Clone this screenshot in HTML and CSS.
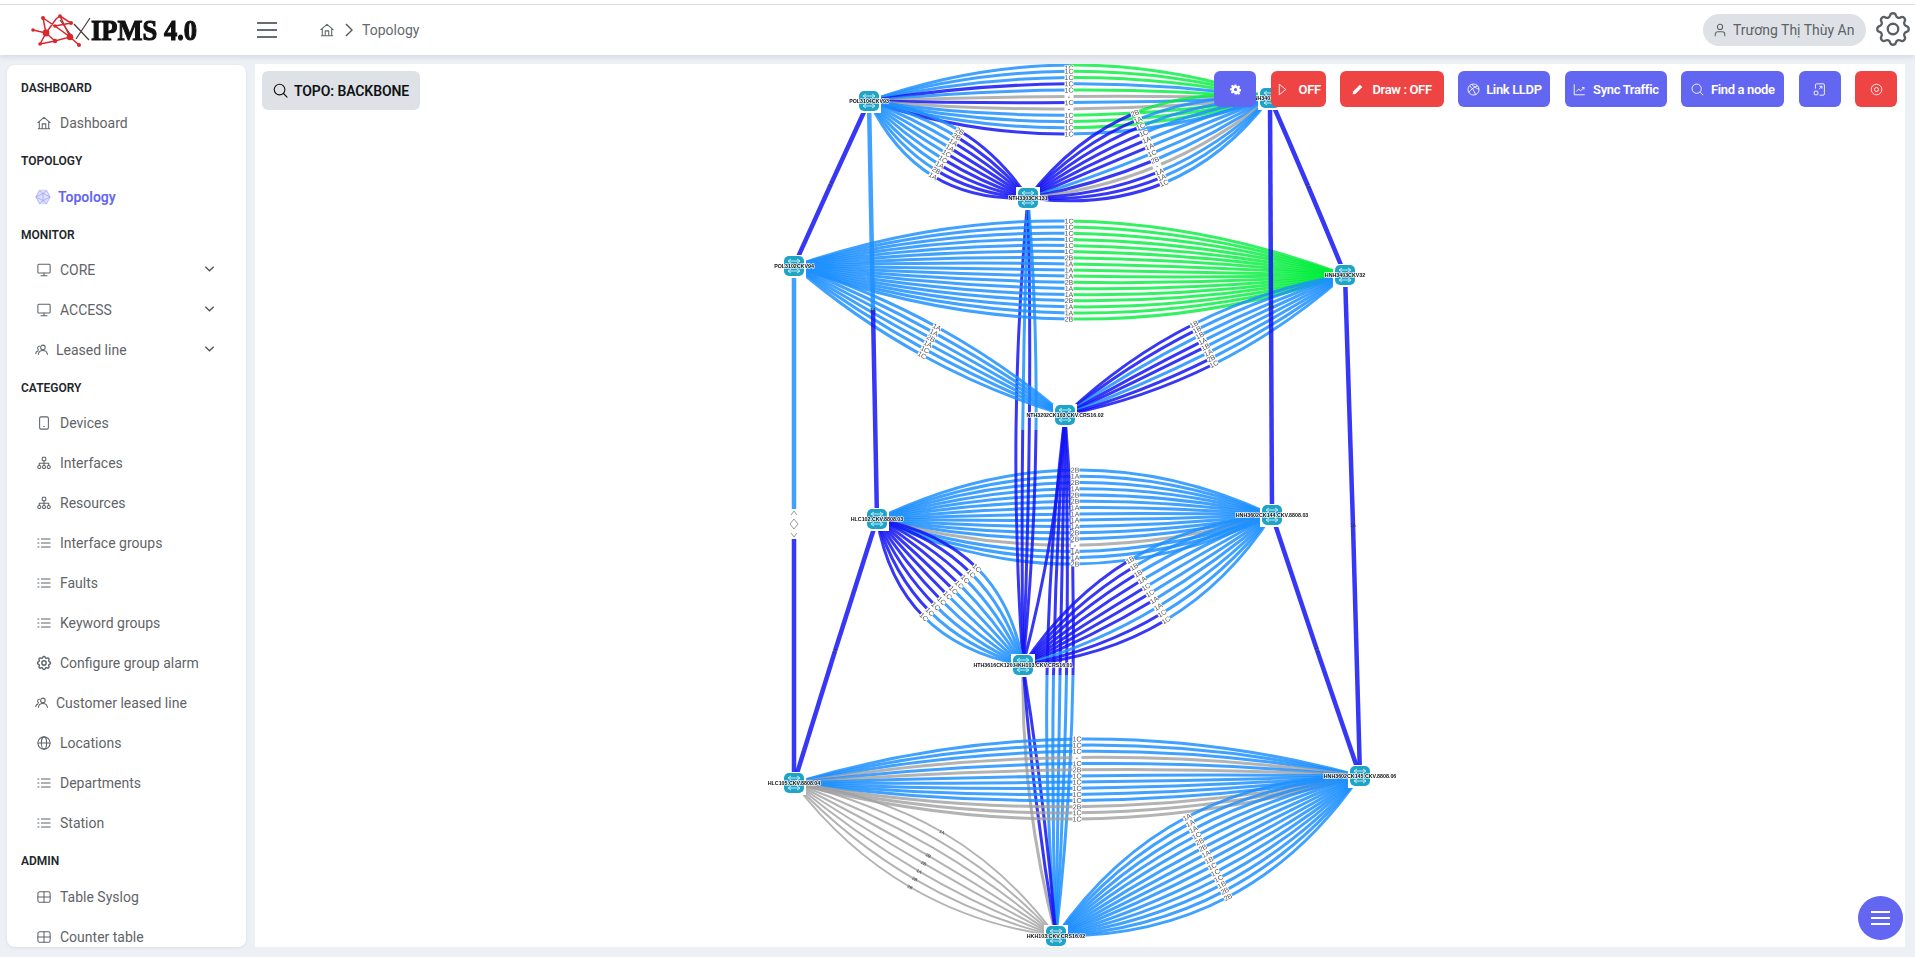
FILE: index.html
```html
<!DOCTYPE html>
<html lang="vi">
<head>
<meta charset="utf-8">
<title>IPMS 4.0 - Topology</title>
<link rel="stylesheet" href="styles.css">
</head>
<body>
<svg class="defs" width="0" height="0" aria-hidden="true">
  <defs>
    <symbol id="i-home" viewBox="0 0 16 16"><path d="M1 7.5 8 1.5l7 6M2.6 6.5V14.5h10.8V6.5M6 14.5V9h4v5.5M1.5 14.5h13"/></symbol>
    <symbol id="i-monitor" viewBox="0 0 16 16"><rect x="1" y="1.5" width="14" height="10" rx="1"/><path d="M8 11.5v3M4.5 14.5h7"/></symbol>
    <symbol id="i-users" viewBox="0 0 16 16"><circle cx="9" cy="5" r="2.6"/><path d="M3.8 13c.5-3 2.5-4.4 5.2-4.4s4.7 1.4 5.2 4.4M5 3.6a2.3 2.3 0 0 0-1 4.2M3.4 9c-1.4.4-2.2 1.4-2.6 3"/></symbol>
    <symbol id="i-device" viewBox="0 0 16 16"><rect x="3" y="1" width="10" height="14" rx="1.5"/><path d="M7.7 12h.6"/></symbol>
    <symbol id="i-tree" viewBox="0 0 16 16"><rect x="6" y="1.5" width="4" height="4" rx=".8"/><circle cx="2.6" cy="12.6" r="1.8"/><circle cx="8" cy="12.6" r="1.8"/><circle cx="13.4" cy="12.6" r="1.8"/><path d="M8 5.5v5.3M2.6 10.8V8.2h10.8v2.6"/></symbol>
    <symbol id="i-list" viewBox="0 0 16 16"><path d="M5 3.5h10M5 8h10M5 12.5h10M1 3.5h1.2M1 8h1.2M1 12.5h1.2"/></symbol>
    <symbol id="i-gear" viewBox="0 0 24 24"><path d="M10.325 4.317c.426-1.756 2.924-1.756 3.35 0a1.724 1.724 0 0 0 2.573 1.066c1.543-.94 3.31.826 2.37 2.37a1.724 1.724 0 0 0 1.065 2.572c1.756.426 1.756 2.924 0 3.35a1.724 1.724 0 0 0-1.066 2.573c.94 1.543-.826 3.31-2.37 2.37a1.724 1.724 0 0 0-2.572 1.065c-.426 1.756-2.924 1.756-3.35 0a1.724 1.724 0 0 0-2.573-1.066c-1.543.94-3.31-.826-2.37-2.37a1.724 1.724 0 0 0-1.065-2.572c-1.756-.426-1.756-2.924 0-3.35a1.724 1.724 0 0 0 1.066-2.573c-.94-1.543.826-3.31 2.37-2.37.996.608 2.296.07 2.572-1.065z"/><circle cx="12" cy="12" r="3"/></symbol>
    <symbol id="i-globe" viewBox="0 0 16 16"><circle cx="8" cy="8" r="7"/><ellipse cx="8" cy="8" rx="3" ry="7"/><path d="M1 8h14"/></symbol>
    <symbol id="i-table" viewBox="0 0 16 16"><rect x="1" y="2" width="14" height="12" rx="2"/><path d="M1 8h14M8 2v12"/></symbol>
    <symbol id="i-chev" viewBox="0 0 12 8"><path d="M1.5 1.5 6 6l4.500-4.500"/></symbol>
    <symbol id="i-search" viewBox="0 0 16 16"><circle cx="7" cy="7" r="5.700"/><path d="m11.200 11.200 3.800 3.800"/></symbol>
    <symbol id="i-user" viewBox="0 0 16 16"><circle cx="8" cy="4.500" r="3"/><path d="M2.500 14.500v-1.500a3 3 0 0 1 3-3h5a3 3 0 0 1 3 3v1.500"/></symbol>
  </defs>
</svg>

<div class="topline"></div>
<header class="header">
  <div class="logo">
    <svg class="logo-mark" viewBox="0 0 60 36" aria-hidden="true">
      <g class="logo-dark"><path d="M43 12 58 28M45 27 59 6M29 8 42 26"/></g>
      <g class="logo-net">
        <path d="M2 18 15 21 9 32M15 21 12 6M15 21 25 7 29 4 40 11 24 14 12 6M15 21 24 29 39 25 24 14M39 25 48 33 M24 29 9 32M29 4 39 25"/>
        <circle cx="2" cy="18" r="1.800"/><circle cx="15" cy="21" r="3.400"/><circle cx="9" cy="32" r="1.800"/><circle cx="12" cy="6" r="2"/><circle cx="24" cy="14" r="1.800"/><circle cx="29" cy="4" r="1.800"/><circle cx="40" cy="11" r="2"/><circle cx="24" cy="29" r="2.200"/><circle cx="39" cy="25" r="3.200"/><circle cx="48" cy="33" r="2"/>
      </g>
    </svg>
    <span class="logo-text">IPMS 4.0</span>
  </div>
  <div class="burger" aria-label="menu"><span></span><span></span><span></span></div>
  <nav class="crumbs">
    <svg class="ico"><use href="#i-home"/></svg>
    <svg class="crumb-sep" viewBox="0 0 8 14"><path d="M1 1l6 6-6 6"/></svg>
    <span>Topology</span>
  </nav>
  <div class="header-right">
    <div class="user-pill"><svg class="ico"><use href="#i-user"/></svg><span>Trương Thị Thùy An</span></div>
    <svg class="big-gear"><use href="#i-gear"/></svg>
  </div>
</header>

<div class="workspace">
  <aside class="sidebar">
    <div class="sec">DASHBOARD</div>
    <a class="item"><svg class="ico"><use href="#i-home"/></svg><span>Dashboard</span></a>
    <div class="sec">TOPOLOGY</div>
    <a class="item active">
      <svg class="ico-topo" viewBox="0 0 18 18"><path d="M5 1.500h8L17 9l-4 7.500H5L1 9z"/><path d="M1 9 9 5l8 4-8 4zM5 1.500 9 5l4-3.500M5 16.500 9 13l4 3.500M9 5v8"/></svg>
      <span>Topology</span>
    </a>
    <div class="sec">MONITOR</div>
    <a class="item"><svg class="ico"><use href="#i-monitor"/></svg><span>CORE</span><svg class="chev"><use href="#i-chev"/></svg></a>
    <a class="item"><svg class="ico"><use href="#i-monitor"/></svg><span>ACCESS</span><svg class="chev"><use href="#i-chev"/></svg></a>
    <a class="item tight"><svg class="ico"><use href="#i-users"/></svg><span>Leased line</span><svg class="chev"><use href="#i-chev"/></svg></a>
    <div class="sec">CATEGORY</div>
    <a class="item"><svg class="ico"><use href="#i-device"/></svg><span>Devices</span></a>
    <a class="item"><svg class="ico"><use href="#i-tree"/></svg><span>Interfaces</span></a>
    <a class="item"><svg class="ico"><use href="#i-tree"/></svg><span>Resources</span></a>
    <a class="item"><svg class="ico"><use href="#i-list"/></svg><span>Interface groups</span></a>
    <a class="item"><svg class="ico"><use href="#i-list"/></svg><span>Faults</span></a>
    <a class="item"><svg class="ico"><use href="#i-list"/></svg><span>Keyword groups</span></a>
    <a class="item"><svg class="ico gear"><use href="#i-gear"/></svg><span>Configure group alarm</span></a>
    <a class="item tight"><svg class="ico"><use href="#i-users"/></svg><span>Customer leased line</span></a>
    <a class="item"><svg class="ico"><use href="#i-globe"/></svg><span>Locations</span></a>
    <a class="item"><svg class="ico"><use href="#i-list"/></svg><span>Departments</span></a>
    <a class="item"><svg class="ico"><use href="#i-list"/></svg><span>Station</span></a>
    <div class="sec">ADMIN</div>
    <a class="item"><svg class="ico"><use href="#i-table"/></svg><span>Table Syslog</span></a>
    <a class="item"><svg class="ico"><use href="#i-table"/></svg><span>Counter table</span></a>
  </aside>

  <main class="canvas">
    <svg id="graph" class="graph" viewBox="255 64 1650 883" aria-label="Backbone topology"></svg>
    <button class="topo-btn"><svg class="ico"><use href="#i-search"/></svg><span>TOPO: BACKBONE</span></button>
    <div class="toolbar">
      <button class="btn indigo square"><svg class="solid" viewBox="0 0 24 24"><path d="M10 1h4l.6 3.200 2 .9 2.800-1.800 2.800 2.800-1.800 2.800.9 2 3.200.6v4l-3.200.6-.9 2 1.800 2.800-2.800 2.800-2.800-1.800-2 .9L14 23h-4l-.6-3.200-2-.9-2.800 1.800-2.800-2.800 1.800-2.800-.9-2L0 14v-4l3.200-.6.9-2L2.300 4.600l2.800-2.800 2.800 1.800 2-.9zM12 8.500a3.500 3.500 0 1 0 0 7 3.500 3.500 0 0 0 0-7z" fill-rule="evenodd"/></svg></button>
      <button class="btn red w-off"><svg class="line" viewBox="0 0 12 16"><path d="M2 1.500v13l8-6.500z"/></svg><span>OFF</span></button>
      <button class="btn red w-draw"><svg class="solid" viewBox="0 0 16 16"><path d="M11.500 1 15 4.500 5 14.500 1 15l.5-4z"/></svg><span>Draw : OFF</span></button>
      <button class="btn indigo w-link"><svg class="line" viewBox="0 0 16 16"><circle cx="8" cy="8" r="6.800"/><path d="M3 3.500c3 2 6 6 7.500 11M13 3.500C9 4.500 4 9 2 11.500M5.500 1.800C9 5 13 7.500 14.800 7.500"/></svg><span>Link LLDP</span></button>
      <button class="btn indigo w-sync"><svg class="line" viewBox="0 0 16 16"><path d="M1.500 1.500v13h13M4 10.500l3-3 2.500 2 4-4M11 5.500h2.500V8"/></svg><span>Sync Traffic</span></button>
      <button class="btn indigo w-find"><svg class="line"><use href="#i-search"/></svg><span>Find a node</span></button>
      <button class="btn indigo square"><svg class="line" viewBox="0 0 16 16"><path d="M3 7V2.500A1.500 1.500 0 0 1 4.500 1h8A1.500 1.500 0 0 1 14 2.500v11a1.500 1.500 0 0 1-1.500 1.500H8M7.500 7.500l3.500-3.500M8 4h3v3"/><rect x="1.500" y="10" width="4.500" height="4.500" rx=".8"/></svg></button>
      <button class="btn red square"><svg class="line" viewBox="0 0 16 16"><circle cx="8" cy="8" r="6.500"/><circle cx="8" cy="8" r="2.500"/></svg></button>
    </div>
    <button class="fab" aria-label="menu"><span></span><span></span><span></span></button>
  </main>
</div>
<script src="graph.js"></script>
</body>
</html>
```
FILE: styles.css
```css
* { box-sizing: border-box; }
html, body { margin: 0; height: 100%; overflow: hidden; }
body {
  display: flex;
  flex-direction: column;
  background: #edf1f6;
  font-family: Roboto, "Noto Sans", "Liberation Sans", sans-serif;
  font-size: 14px;
  color: #5f6468;
}
.defs { position: absolute; }
svg { display: block; flex: none; }

.topline { height: 5px; flex: none; background: #fff; border-bottom: 1px solid #dfe1e4; }
.header {
  height: 50px;
  flex: none;
  display: flex;
  align-items: center;
  background: #fff;
  box-shadow: 0 2px 5px rgba(120, 130, 150, .22);
  position: relative;
  z-index: 2;
}
.logo { width: 257px; padding-left: 31px; display: flex; align-items: center; flex: none; }
.logo-mark { width: 60px; height: 36px; }
.logo-net path { fill: none; stroke: #d9272b; stroke-width: 1.500; }
.logo-net circle { fill: #d9272b; }
.logo-dark path { fill: none; stroke: #4a3a3c; stroke-width: 1.200; }
.logo-text {
  font-family: "Liberation Serif", serif;
  font-weight: 700;
  font-size: 26.500px;
  line-height: 30px;
  color: #111;
  white-space: nowrap;
  -webkit-text-stroke: 1px #111;
  transform: scaleY(1.150);
}
.burger { width: 20px; display: flex; flex-direction: column; gap: 5px; flex: none; }
.burger span { height: 2px; background: #666d74; }
.crumbs { margin-left: 43px; display: flex; align-items: center; gap: 11px; color: #646a70; }
.crumbs .ico { width: 14px; height: 14px; }
.crumb-sep { width: 8px; height: 14px; fill: none; stroke: #555; stroke-width: 1.400; margin-right: -2px; }
.header-right { margin-left: auto; padding-right: 1px; display: flex; align-items: center; gap: 6px; }
.user-pill {
  width: 163px;
  height: 32px;
  border-radius: 16px;
  background: #dee2e6;
  display: flex;
  align-items: center;
  gap: 6px;
  padding-left: 10px;
  white-space: nowrap;
  color: #5d6369;
}
.big-gear { width: 42px; height: 42px; fill: none; stroke: #5a5f64; stroke-width: 1.300; margin-top: -2px; }

.ico { width: 14px; height: 14px; fill: none; stroke: #5f6468; stroke-width: 1.200; stroke-linecap: round; stroke-linejoin: round; }
.ico.gear { stroke-width: 1.900; transform: scale(1.250); }

.workspace { flex: 1; min-height: 0; display: flex; gap: 9px; padding: 9px 10px 10px 7px; }
.sidebar {
  width: 239px;
  flex: none;
  margin-top: 1px;
  background: #fff;
  border-radius: 8px;
  box-shadow: 0 1px 3px rgba(120, 130, 150, .15);
  padding: 5px 0 0 0;
  overflow: hidden;
}
.sec {
  height: 33.330px;
  padding: 9px 0 5px 14px;
  font-size: 12px;
  line-height: 18px;
  font-weight: 600;
  color: #22272b;
}
.item {
  height: 40px;
  display: flex;
  align-items: center;
  padding-left: 30px;
  gap: 9px;
  white-space: nowrap;
  position: relative;
}
.item.tight { padding-left: 28px; gap: 7px; }
.item.active { padding-left: 28px; gap: 7px; color: #6366f1; font-weight: 600; }
.ico-topo { width: 16px; height: 16px; fill: #dfe0fc; stroke: #9d9ff6; stroke-width: .8; }
.chev { position: absolute; left: 197px; top: 15px; width: 11px; height: 8px; fill: none; stroke: #555; stroke-width: 1.500; }

.canvas { flex: 1; min-width: 0; background: #fff; position: relative; overflow: hidden; }
.graph { position: absolute; left: 0; top: 0; width: 100%; height: 100%; filter: blur(.35px); }
.graph .edge { fill: none; stroke-width: 3; }
.graph .edge.thin { stroke-width: 2; }
.graph .edge.thick { stroke-width: 4.500; }
.graph .c-l { stroke: rgba(30, 144, 255, .85); }
.graph .c-d { stroke: rgba(20, 20, 245, .85); }
.graph .c-g { stroke: rgba(0, 238, 60, .8); }
.graph .c-y { stroke: rgba(160, 160, 160, .8); }
.graph .lab-bg { fill: #fff; }
.graph .lab { font-family: "Liberation Sans", sans-serif; font-size: 7px; fill: #555; text-anchor: middle; dominant-baseline: central; }
.graph .lab.small { font-size: 4.500px; fill: #333; }
.graph .node-bg { fill: #fff; }
.graph .node-body { fill: #1fa3c6; }
.graph .node-mark { fill: none; stroke: #bfeaf5; stroke-width: 1; }
.graph .node-lab {
  font-family: "Liberation Sans", sans-serif;
  font-size: 5.300px;
  font-weight: 700;
  fill: #111;
  text-anchor: middle;
  dominant-baseline: central;
  paint-order: stroke;
  stroke: rgba(255, 255, 255, .85);
  stroke-width: 1.500px;
}

.topo-btn {
  position: absolute;
  left: 7px;
  top: 7px;
  width: 158px;
  height: 39px;
  border: 0;
  border-radius: 6px;
  background: #dee2e6;
  color: #101214;
  font: 600 14px Roboto, sans-serif;
  letter-spacing: -.1px;
  display: flex;
  align-items: center;
  gap: 6px;
  padding: 0 0 0 11px;
}
.topo-btn .ico { width: 15px; height: 15px; stroke: #111; stroke-width: 1.200; }
.toolbar { position: absolute; right: 8px; top: 7px; display: flex; gap: 14.400px; }
.btn {
  height: 36px;
  border: 0;
  border-radius: 6px;
  color: #fff;
  font: 600 13px Roboto, sans-serif;
  letter-spacing: -.35px;
  display: flex;
  align-items: center;
  justify-content: center;
  gap: 6px;
  padding: 0;
  white-space: nowrap;
}
.btn.indigo { background: #6366f1; }
.btn.red { background: #ef4444; }
.btn.square { width: 42px; }
.w-off { width: 55px; gap: 10px; }
.w-draw { width: 104px; gap: 9px; }
.w-link { width: 92px; }
.w-sync { width: 102px; gap: 7px; }
.w-find { width: 103px; gap: 7px; }
.btn .solid { width: 11px; height: 11px; fill: #fff; }
.btn .line { width: 13px; height: 13px; fill: none; stroke: #fff; stroke-width: 1.100; }
.fab {
  position: absolute;
  right: 2px;
  bottom: 7px;
  width: 45px;
  height: 44px;
  border: 0;
  border-radius: 50%;
  background: #6366f1;
  display: flex;
  flex-direction: column;
  justify-content: center;
  align-items: center;
  gap: 4px;
  padding: 0;
}
.fab span { width: 19px; height: 2px; background: #fff; }
```
FILE: graph.js
```js
(function () {
  var NS = 'http://www.w3.org/2000/svg';
  var svg = document.getElementById('graph');
  function el(name, attrs, parent, text) {
    var e = document.createElementNS(NS, name);
    for (var k in attrs) e.setAttribute(k, attrs[k]);
    if (text !== undefined) e.textContent = text;
    (parent || svg).appendChild(e);
    return e;
  }

  var N = {
    A: { x: 869, y: 101, t: 'POL3104CKV93' },
    B: { x: 1270, y: 98, t: 'HNH3403CKV92' },
    C: { x: 1028, y: 198, t: 'NTH3303CK131' },
    D: { x: 794, y: 266, t: 'POL3102CKV94' },
    E: { x: 1345, y: 275, t: 'HNH3403CKV32' },
    F: { x: 1065, y: 415, t: 'NTH3202CK103.CKV.CRS16.02' },
    G: { x: 877, y: 519, t: 'HLC102.CKV.8808.03' },
    H: { x: 1272, y: 515, t: 'HNH3602CK144.CKV.8808.03' },
    I: { x: 1023, y: 665, t: 'HTH3616CK120.HKH103.CKV.CRS16.01' },
    J: { x: 794, y: 783, t: 'HLC105.CKV.8808.04' },
    K: { x: 1360, y: 776, t: 'HNH3602CK145.CKV.8808.06' },
    L: { x: 1056, y: 936, t: 'HKH103.CKV.CRS16.02' }
  };

  function rep(ch, n) { return new Array(n + 1).join(ch); }

  // a, b: nodes; from/to: where the first and last curve cross their middle;
  // ca, cb: colour of each curve on the a side and b side; labs: middle labels.
  var families = [
    { a: 'G', b: 'H', from: [1075, 470], to: [1075, 564], ca: 'llllllllllllylll', cb: 'llllllllllllylll', labs: '2B 1A 2B 1A 2B 2B 1A 1A 1A 1A 2B 2B - 1A 1A 2B' },
    { a: 'C', b: 'I', from: [1016, 430], to: [1036, 430], n: 4, ca: 'dldl', cb: 'dddd' },
    { a: 'F', b: 'L', from: [1047, 675], to: [1073, 675], n: 5, ca: 'ddddd', cb: 'lllll' },
    { a: 'F', b: 'I', from: [1050, 540], to: [1050, 540], n: 1, ca: 'd', cb: 'd' },
    { a: 'I', b: 'L', from: [1030, 800], to: [1042, 800], n: 3, ca: 'ydd', cb: 'ydd' },
    { a: 'A', b: 'B', from: [1069, 65], to: [1069, 134], ca: 'llldlydyllld', cb: 'ggglgylygggl', labs: '1C 1C 1C 1C 1C - 1C - 1C 1C 1C 1C', nudge: 3 },
    { a: 'D', b: 'E', from: [1069, 221], to: [1069, 319], ca: rep('l', 17), cb: rep('g', 17), labs: '1C 1C 1C 1C 1C 1C 2B 1A 1A 1A 2B 1A 1A 2B 1A 1A 2B' },
    { a: 'A', b: 'C', from: [960, 131], to: [933, 176], ca: rep('l', 9), cb: rep('d', 9), labs: '2B 2B 1A 1A 1C 1C 1A 2B 1A' },
    { a: 'B', b: 'C', from: [1135, 113], to: [1155, 160], ca: 'glllllll', cb: 'ddddddld', labs: '2B 1A 1C 1C 1A 1A 1C 2B' },
    { a: 'B', b: 'C', from: [1157, 166], to: [1164, 183], n: 4, ca: 'ylll', cb: 'yddd', labs: '- 1A 1A 1C' },
    { a: 'D', b: 'F', from: [937, 327], to: [922, 355], ca: rep('l', 6), cb: rep('l', 6), labs: '1A 1A 2B 1A 1C 1C' },
    { a: 'E', b: 'F', from: [1194, 324], to: [1214, 364], ca: rep('l', 8), cb: 'ddlddldd', labs: '1B 1B 1B 1A 1B 1A 2B 1C' },
    { a: 'G', b: 'I', from: [977, 568], to: [924, 617], ca: rep('d', 10), cb: rep('l', 10), labs: '1C 1C 1C 1C 1C 1C 1C 1C 1C 1C' },
    { a: 'H', b: 'I', from: [1130, 560], to: [1166, 620], ca: rep('l', 10), cb: 'dddddddldd', labs: '1B 1B 1B 1A 1C 1C 1A 1A 1C 1C' },
    { a: 'J', b: 'K', from: [1077, 739], to: [1077, 819], ca: 'lllylylllllyyy', cb: 'lllylylllllyyy', labs: '1C 1C 1C - 1C 2B 1C 1C 1C 1C 1C 2B 1C 1C' },
    { a: 'J', b: 'L', from: [942, 832], to: [910, 887], n: 8, ca: rep('y', 8), cb: rep('y', 8), thin: true, small: true, labs: '1A - - 2B 2B 1A 2B 2B' },
    { a: 'K', b: 'L', from: [1187, 817], to: [1228, 897], ca: rep('l', 14), cb: rep('l', 14), labs: '1A 1A 1A 1C 2B 2B 1A 1B 1C 1C 1C 1B 2B 2B' },
    // single links between the two side columns
    { a: 'A', b: 'D', mid: [831, 184], ca: 'd', cb: 'd', labs: '1A', thick: true, small: true },
    { a: 'A', b: 'G', mid: [873, 310], ca: 'l', cb: 'd', labs: '1A', thick: true, small: true },
    { a: 'B', b: 'E', mid: [1308, 186], ca: 'd', cb: 'd', labs: '1A', thick: true, small: true },
    { a: 'B', b: 'H', mid: [1271, 306], ca: 'd', cb: 'd', labs: '1A', thick: true, small: true },
    { a: 'D', b: 'J', mid: [794, 524], ca: 'l', cb: 'd', labs: '', thick: true },
    { a: 'E', b: 'K', mid: [1353, 525], ca: 'd', cb: 'd', labs: '1A', thick: true, small: true },
    { a: 'G', b: 'J', mid: [835, 651], ca: 'd', cb: 'd', labs: '1A', thick: true, small: true },
    { a: 'H', b: 'K', mid: [1317, 650], ca: 'd', cb: 'd', labs: '1A', thick: true, small: true }
  ];

  function lerp(p, q, t) { return [p[0] + (q[0] - p[0]) * t, p[1] + (q[1] - p[1]) * t]; }
  function fmt(p) { return p[0].toFixed(1) + ' ' + p[1].toFixed(1); }

  var edges = el('g', {});
  var labels = el('g', {});

  families.forEach(function (f) {
    var a = [N[f.a].x, N[f.a].y], b = [N[f.b].x, N[f.b].y];
    var labs = f.labs ? f.labs.split(' ') : [];
    var n = f.mid ? 1 : (f.n || labs.length);
    var weight = f.thick ? ' thick' : (f.thin ? ' thin' : '');
    for (var i = 0; i < n; i++) {
      var m = f.mid || lerp(f.from, f.to, n > 1 ? i / (n - 1) : 0);
      var c = [2 * m[0] - (a[0] + b[0]) / 2, 2 * m[1] - (a[1] + b[1]) / 2];
      var c1 = lerp(a, c, .5), c2 = lerp(c, b, .5), mm = lerp(c1, c2, .5);
      el('path', { d: 'M' + fmt(a) + 'Q' + fmt(c1) + ' ' + fmt(mm), 'class': 'edge c-' + f.ca[i] + weight }, edges);
      el('path', { d: 'M' + fmt(b) + 'Q' + fmt(c2) + ' ' + fmt(mm), 'class': 'edge c-' + f.cb[i] + weight }, edges);
      var t = labs[i];
      if (t) {
        var ang = Math.atan2(b[1] - a[1], b[0] - a[0]) * 180 / Math.PI;
        if (ang > 90) ang -= 180;
        if (ang < -90) ang += 180;
        if (Math.abs(ang) > 80) ang = 0;
        var ly = mm[1] + (i === 0 && f.nudge ? f.nudge : 0);
        var g = el('g', { transform: 'translate(' + mm[0].toFixed(1) + ',' + ly.toFixed(1) + ') rotate(' + ang.toFixed(1) + ')' }, labels);
        if (!f.small) el('rect', { x: -4.5, y: -2.8, width: 9, height: 5.6, 'class': 'lab-bg' }, g);
        el('text', { 'class': 'lab' + (f.small ? ' small' : '') }, g, t);
      }
    }
  });

  // the small diamond marker on the left column link
  var mark = el('g', { transform: 'translate(794,524)' }, labels);
  el('rect', { x: -5, y: -15, width: 10, height: 30, 'class': 'lab-bg' }, mark);
  el('path', { d: 'M-3 -9 0 -13 3 -9M-3 9 0 13 3 9M-4 0 0 -5 4 0 0 5z', fill: 'none', stroke: '#999', 'stroke-width': 1 }, mark);

  Object.keys(N).forEach(function (k) {
    var d = N[k];
    var g = el('g', { transform: 'translate(' + d.x + ',' + d.y + ')' });
    el('rect', { x: -12, y: -11, width: 24, height: 23, 'class': 'node-bg' }, g);
    el('rect', { x: -10, y: -10, width: 20, height: 20, rx: 5, 'class': 'node-body' }, g);
    el('path', { d: 'M-6 -5H6M-3 -7-6 -5-3 -3M3 -7 6 -5 3 -3M-6 5H6M-3 3-6 5-3 7M3 3 6 5 3 7', 'class': 'node-mark' }, g);
    el('text', { 'class': 'node-lab', x: 0, y: 0 }, g, d.t);
  });
})();
```
